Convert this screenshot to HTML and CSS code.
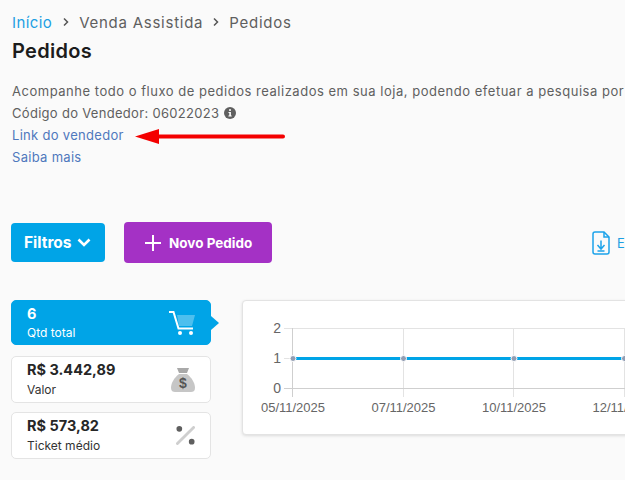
FILE: index.html
```html
<!DOCTYPE html>
<html lang="pt-BR">
<head>
<meta charset="utf-8">
<title>Pedidos</title>
<link rel="stylesheet" href="styles.css">
</head>
<body>
<main class="page">
  <nav class="crumbs">
    <a class="crumb-home">Início</a>
    <svg class="crumb-sep" viewBox="0 0 8 10"><path d="M2 1.500 5.500 5 2 8.500" /></svg>
    <span>Venda Assistida</span>
    <svg class="crumb-sep" viewBox="0 0 8 10"><path d="M2 1.500 5.500 5 2 8.500" /></svg>
    <span>Pedidos</span>
  </nav>
  <h1 class="title">Pedidos</h1>
  <section class="intro">
    <p class="line line-wide">Acompanhe todo o fluxo de pedidos realizados em sua loja, podendo efetuar a pesquisa por</p>
    <p class="line">Código do Vendedor: 06022023
      <svg class="info" viewBox="0 0 12 12"><circle cx="6" cy="6" r="6" fill="#5f5f5f"/><rect x="5.100" y="2.200" width="1.800" height="1.700" fill="#fff"/><path d="M4.500 5h2.400v3.600h.8v1H4.400v-1h.9V6h-.8z" fill="#fff"/></svg>
    </p>
    <p class="line"><a class="link">Link do vendedor</a></p>
    <p class="line"><a class="link">Saiba mais</a></p>
  </section>
  <svg class="annotation" viewBox="0 0 152 16"><path d="M0 7.500 24 0v5.500h124a2 2 0 0 1 0 4H24V15z" fill="#f40000"/></svg>

  <section class="actions">
    <button class="btn btn-filter">Filtros
      <svg class="chev" viewBox="0 0 14 9"><path d="M1.500 1.500 7 7l5.500-5.500"/></svg>
    </button>
    <button class="btn btn-new">
      <svg class="plus" viewBox="0 0 16 16"><path d="M8 0v16M0 8h16"/></svg>
      Novo Pedido
    </button>
    <a class="export">
      <svg class="export-icon" viewBox="0 0 18 24"><path d="M3 1h9l5 5v15a2 2 0 0 1-2 2H3a2 2 0 0 1-2-2V3a2 2 0 0 1 2-2z"/><path d="M12 1v5h5"/><path d="M9 9.500v8M5.500 14 9 18l3.500-4M5.500 20h7"/></svg>
      E
    </a>
  </section>

  <section class="stats-row">
    <div class="stats">
      <div class="stat stat-active">
        <div class="stat-text">
          <strong class="stat-value small">6</strong>
          <span class="stat-label">Qtd total</span>
        </div>
        <svg class="stat-icon cart" viewBox="0 0 28 26">
          <path d="M9 5h18l-3 11H11z" fill="#fff" fill-opacity=".3"/>
          <path d="M1 2h4.500l5 16.500H25" fill="none" stroke="#fff" stroke-width="2"/>
          <circle cx="12" cy="23" r="2" fill="#fff"/><circle cx="23" cy="23" r="2" fill="#fff"/>
        </svg>
      </div>
      <div class="stat">
        <div class="stat-text">
          <strong class="stat-value">R$ 3.442,89</strong>
          <span class="stat-label">Valor</span>
        </div>
        <svg class="stat-icon bag" viewBox="0 0 24 24">
          <path d="M6 0h12l-2 5H8z" fill="#a9a9a9"/>
          <path d="M8 6h8c5 4 8 9 8 14 0 3-2 4-4 4H4c-2 0-4-1-4-4 0-5 3-10 8-14z" fill="#c6c6c6"/>
          <text class="bag-sign" x="12" y="20">$</text>
        </svg>
      </div>
      <div class="stat">
        <div class="stat-text">
          <strong class="stat-value">R$ 573,82</strong>
          <span class="stat-label">Ticket médio</span>
        </div>
        <svg class="stat-icon pct" viewBox="0 0 20 20">
          <path d="M1.500 18.500 18.500 1.500" stroke="#cfcfcf" stroke-width="3" stroke-linecap="round"/>
          <circle cx="3.500" cy="3" r="3" fill="#5f5f5f"/><circle cx="16.500" cy="16.500" r="3" fill="#5f5f5f"/>
        </svg>
      </div>
    </div>

    <div class="chart-card">
      <svg class="chart" width="420" height="135" viewBox="242 300 420 135">
        <g class="grid">
          <path d="M284 328.500H662M284 358.500H662M403.500 328V397M513.500 328V397M624.500 328V397"/>
        </g>
        <g class="axis">
          <path d="M284 388.500H662M292.500 328V397"/>
        </g>
        <g class="y-labels">
          <text x="281" y="333">2</text>
          <text x="281" y="363">1</text>
          <text x="281" y="393">0</text>
        </g>
        <g class="x-labels">
          <text x="293" y="412">05/11/2025</text>
          <text x="403.500" y="412">07/11/2025</text>
          <text x="514" y="412">10/11/2025</text>
          <text x="624.500" y="412">12/11/2025</text>
        </g>
        <path class="series" d="M293 358.500H662"/>
        <g class="dots">
          <circle cx="293" cy="358.500" r="3"/>
          <circle cx="403.500" cy="358.500" r="3"/>
          <circle cx="514" cy="358.500" r="3"/>
          <circle cx="624.500" cy="358.500" r="3"/>
        </g>
      </svg>
    </div>
  </section>
</main>
</body>
</html>
```

FILE: styles.css
```css
* { box-sizing: border-box; }
html, body {
  margin: 0;
  height: 480px;
  width: 625px;
  overflow: hidden;
  background: #fafafa;
}
body {
  font-family: Inter, "Open Sans", sans-serif;
  color: #5f5f5f;
}
.page {
  position: relative;
  width: 625px;
  height: 480px;
  padding: 12px 0 0 11px;
  overflow: hidden;
}
.crumbs {
  display: flex;
  align-items: center;
  gap: 9px;
  height: 20px;
  font-size: 15px;
  letter-spacing: .75px;
  white-space: nowrap;
}
.crumb-home { color: #1d9fe3; margin-left: 1px; margin-right: 1px; letter-spacing: .4px; }
.crumb-sep { width: 8px; height: 10px; flex: none; fill: none; stroke: #555; stroke-width: 1.500; }
.title {
  margin: 5px 0 0;
  padding-left: 1px;
  font-size: 20px;
  line-height: 28px;
  font-weight: 600;
  letter-spacing: .3px;
  color: #1c1c1c;
}
.intro { margin-top: 15px; }
.line {
  display: flex;
  align-items: center;
  gap: 5px;
  margin: 0;
  height: 22px;
  padding-left: 1px;
  font-size: 13px;
  letter-spacing: .3px;
  white-space: nowrap;
}
.line-wide { letter-spacing: .52px; }
.info { width: 12px; height: 12px; flex: none; }
.link { color: #4f78bd; }
.annotation {
  position: absolute;
  left: 135px;
  top: 129px;
  width: 152px;
  height: 16px;
}
.actions {
  display: flex;
  align-items: center;
  margin-top: 54px;
  height: 41px;
}
.btn {
  display: flex;
  align-items: center;
  flex: none;
  border: 0;
  border-radius: 4px;
  color: #fff;
  font-family: inherit;
  font-weight: 700;
  padding: 0;
  white-space: nowrap;
}
.btn-filter {
  width: 94px;
  height: 39px;
  padding-left: 13px;
  gap: 5px;
  background: #00a4e7;
  font-size: 15.500px;
}
.chev { width: 14px; height: 9px; flex: none; fill: none; stroke: #fff; stroke-width: 2.600; }
.btn-new {
  width: 148px;
  height: 41px;
  margin-left: 19px;
  padding-left: 21px;
  gap: 8px;
  background: #a431c5;
  font-size: 13.500px;
}
.plus { width: 16px; height: 16px; flex: none; fill: none; stroke: #fff; stroke-width: 2; }
.export {
  display: flex;
  align-items: center;
  gap: 7px;
  margin-left: 320px;
  font-size: 13px;
  color: #1d9fe3;
  white-space: nowrap;
}
.export-icon { width: 18px; height: 24px; flex: none; fill: none; stroke: #1ca3ea; stroke-width: 1.500; }
.stats-row {
  display: flex;
  align-items: flex-start;
  margin-top: 37px;
}
.stats {
  display: flex;
  flex-direction: column;
  gap: 9px;
  width: 200px;
  flex: none;
}
.stat {
  display: flex;
  align-items: center;
  justify-content: space-between;
  height: 47px;
  padding: 0 15px 0 15px;
  background: #fff;
  border: 1px solid #e4e4e4;
  border-radius: 5px;
}
.stat-active {
  position: relative;
  height: 45px;
  margin-bottom: 2px;
  background: #00a4e7;
  border-color: #00a4e7;
  color: #fff;
}
.stat-active::after {
  content: "";
  position: absolute;
  right: -9px;
  top: 15px;
  border-left: 8px solid #00a4e7;
  border-top: 7px solid transparent;
  border-bottom: 7px solid transparent;
}
.stat-text { display: flex; flex-direction: column; margin-top: -1px; }
.stat-value {
  font-size: 14.500px;
  line-height: 20px;
  font-weight: 700;
  color: #262626;
}
.stat-value.small { color: #fff; }
.stat-label {
  margin-top: 1px;
  font-size: 12px;
  line-height: 17px;
  color: #333;
}
.stat-active .stat-label { color: #fff; margin-top: 0; }
.cart { width: 28px; height: 26px; margin-right: -1px; }
.bag { width: 24px; height: 24px; }
.pct { width: 19px; height: 19px; }
.bag-sign {
  font-family: "Liberation Sans", sans-serif;
  font-size: 14px;
  font-weight: 700;
  fill: #555;
  text-anchor: middle;
}
.chart-card {
  flex: none;
  width: 420px;
  height: 135px;
  margin-left: 31px;
  background: #fff;
  border-radius: 4px;
  border: 1px solid #e3e3e3;
  box-shadow: 0 1px 3px rgba(0, 0, 0, .12);
  overflow: hidden;
}
.chart { display: block; margin: -1px; }
.grid path { stroke: #e3e3e3; fill: none; }
.axis path { stroke: #cfcfcf; fill: none; }
.y-labels text {
  font-family: "Liberation Sans", sans-serif;
  font-size: 14px;
  fill: #666;
  text-anchor: end;
}
.x-labels text {
  font-family: "Liberation Sans", sans-serif;
  font-size: 13px;
  fill: #666;
  text-anchor: middle;
}
.series { stroke: #00a4e7; stroke-width: 3; fill: none; }
.dots circle { fill: #929db3; stroke: #fff; stroke-width: 1; }
```
